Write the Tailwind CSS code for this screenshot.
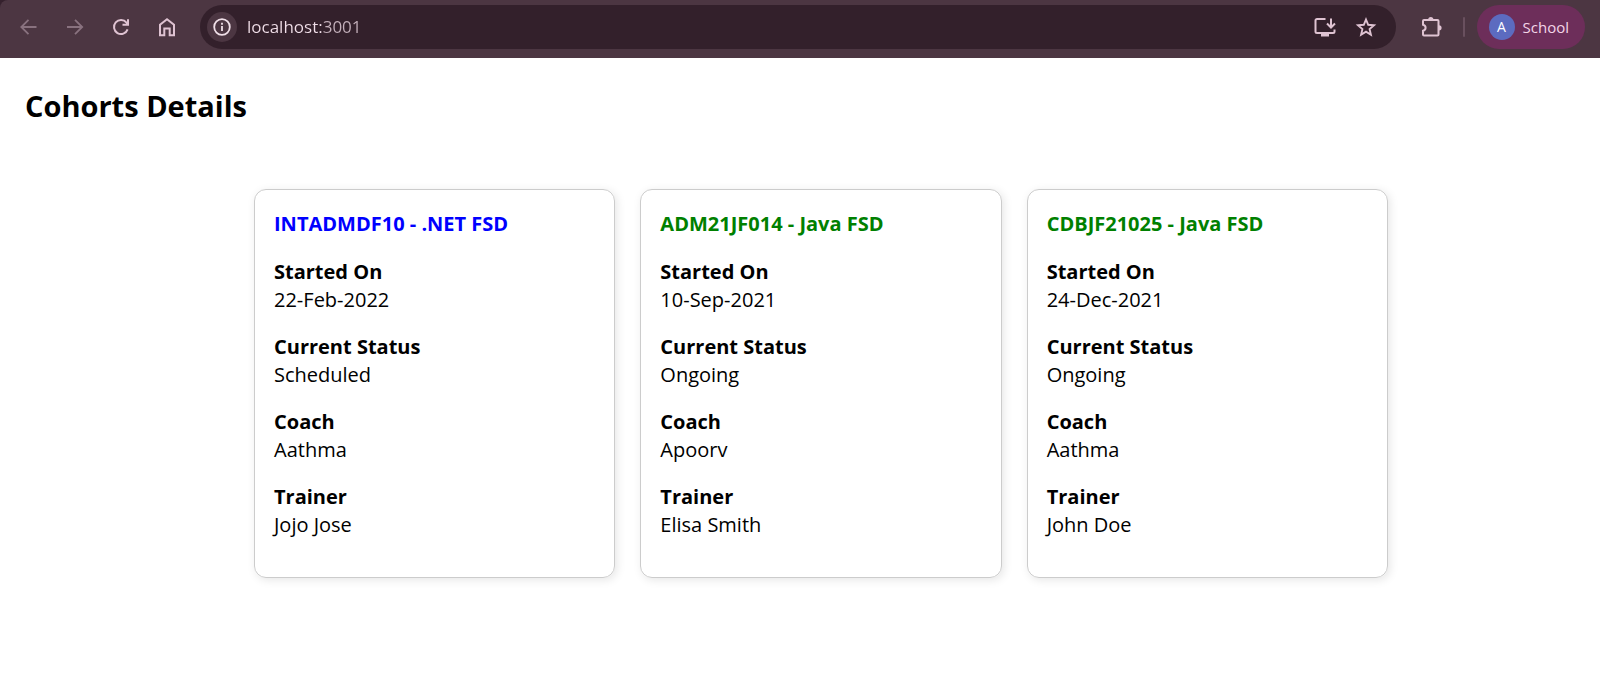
<!DOCTYPE html>
<html lang="en">
<head>
<meta charset="utf-8">
<meta name="viewport" content="width=device-width, initial-scale=1">
<title>Cohorts Details</title>
<script src="https://cdn.jsdelivr.net/npm/@tailwindcss/browser@4"></script>
</head>
<body class="bg-white font-['Open_Sans','Noto_Sans',sans-serif] text-black">
<header class="bg-[#35212d]">
  <div class="flex h-[58px] items-center rounded-tl-lg bg-[#4c3642] pr-[15px] pl-[17px] pb-1 text-[#dfc3d2]">
    <nav class="flex items-center gap-[22px]" aria-label="Browser navigation">
      <button type="button" aria-label="Back" class="grid size-6 place-items-center text-[#89727f]">
        <svg class="size-6" viewBox="0 0 24 24" fill="none" stroke="currentColor" stroke-width="1.8"><path d="M19.500 12H5M11.500 4.800 4.300 12l7.200 7.200"/></svg>
      </button>
      <button type="button" aria-label="Forward" class="grid size-6 place-items-center text-[#89727f]">
        <svg class="size-6" viewBox="0 0 24 24" fill="none" stroke="currentColor" stroke-width="1.8"><path d="M4 12h14.500M12 4.800l7.200 7.200-7.200 7.200"/></svg>
      </button>
      <button type="button" aria-label="Reload" class="grid size-6 place-items-center">
        <svg class="size-6" viewBox="0 0 24 24" fill="none" stroke="currentColor" stroke-width="2"><path d="M18.600 14.400A7 7 0 1 1 17.500 7.700L19 9.500M19 4.300v5.500h-5.500"/></svg>
      </button>
      <button type="button" aria-label="Home" class="grid size-6 place-items-center">
        <svg class="size-6" viewBox="0 0 24 24" fill="none" stroke="currentColor" stroke-width="2"><path d="M5 20.300V9.700l7-5.400 7 5.400v10.600h-4.300v-6.800H9.300v6.800z"/></svg>
      </button>
    </nav>
    <div class="ml-[21px] flex h-11 min-w-0 flex-1 items-center rounded-full bg-[#33202b] pr-[18px] pl-[7px]">
      <button type="button" aria-label="View site information" class="grid size-[30px] shrink-0 place-items-center rounded-full bg-[#4c3642] text-[#f0dfe8]">
        <svg class="size-5" viewBox="0 0 20 20" fill="none" stroke="currentColor" stroke-width="1.800"><circle cx="10" cy="10" r="7.800"/><path d="M10 9v5M10 5.800v2"/></svg>
      </button>
      <input type="text" aria-label="Address" value="localhost:3001" class="ml-[10px] min-w-0 flex-1 bg-[linear-gradient(90deg,#f1dfe9_75px,#c5b1bc_75px)] bg-clip-text text-[17px] leading-7 text-transparent outline-none">
      <button type="button" aria-label="Install app" class="grid size-6 shrink-0 place-items-center">
        <svg class="size-6" viewBox="0 0 24 24" fill="none" stroke="currentColor" stroke-width="2"><path d="M12.500 4H4a1.500 1.500 0 0 0-1.500 1.500v11A1.500 1.500 0 0 0 4 18h16a1.500 1.500 0 0 0 1.500-1.500V14.500M18 3.500v8.500M14 8.500l4 4 4-4"/><path d="M8 18h8v3.500H8z" fill="currentColor" stroke="none"/></svg>
      </button>
      <button type="button" aria-label="Bookmark this page" class="ml-[17px] grid size-6 shrink-0 place-items-center">
        <svg class="size-6" viewBox="0 0 24 24" fill="none" stroke="currentColor" stroke-width="1.900"><path d="m12 4.500 2.200 5.300 5.800.5-4.400 3.800 1.300 5.600-4.900-3-4.900 3 1.300-5.600L4 10.300l5.800-.5z"/></svg>
      </button>
    </div>
    <button type="button" aria-label="Extensions" class="ml-[23px] grid size-6 shrink-0 place-items-center">
      <svg class="size-6" viewBox="0 0 24 24"><path d="M5 5h13.500a1 1 0 0 1 1 1v13.500a1 1 0 0 1-1 1H5a1 1 0 0 1-1-1v-3.700c1.700-.4 2.600-1.500 2.600-3s-.9-2.600-2.600-3V6a1 1 0 0 1 1-1z" fill="none" stroke="currentColor" stroke-width="2"/><path d="M9.200 4.500a2.600 2.600 0 0 1 5.200 0zM20 10.200a2.600 2.600 0 0 1 0 5.200z" fill="currentColor"/></svg>
    </button>
    <span class="ml-5 h-5 w-0.5 shrink-0 rounded-full bg-[#69505e]"></span>
    <button type="button" class="ml-3 flex h-11 shrink-0 items-center gap-2 rounded-full bg-[#6d2e5a] pr-4 pl-3 text-[15px] text-[#f3d5e7]">
      <span class="grid size-[26px] place-items-center rounded-full bg-[#5c6bc0] text-sm text-white">A</span>
      School
    </button>
  </div>
</header>
<main class="pt-6 pb-10">
  <h1 class="px-[25px] text-[29px] leading-12 font-bold">Cohorts Details</h1>
  <div class="mt-[59px] grid grid-cols-3 gap-[25px] pr-[212px] pl-[254px] text-xl leading-7">
    <section class="rounded-xl border border-[#ccc] px-[19px] pt-5 pb-[38px] shadow-[2px_2px_10px_rgba(0,0,0,0.1)]">
      <h2 class="font-bold text-[#0000ff]">INTADMDF10 - .NET FSD</h2>
      <dl class="mt-5 grid">
        <dt class="font-bold">Started On</dt><dd class="mb-[19px]">22-Feb-2022</dd>
        <dt class="font-bold">Current Status</dt><dd class="mb-[19px]">Scheduled</dd>
        <dt class="font-bold">Coach</dt><dd class="mb-[19px]">Aathma</dd>
        <dt class="font-bold">Trainer</dt><dd>Jojo Jose</dd>
      </dl>
    </section>
    <section class="rounded-xl border border-[#ccc] px-[19px] pt-5 pb-[38px] shadow-[2px_2px_10px_rgba(0,0,0,0.1)]">
      <h2 class="font-bold text-[#008000]">ADM21JF014 - Java FSD</h2>
      <dl class="mt-5 grid">
        <dt class="font-bold">Started On</dt><dd class="mb-[19px]">10-Sep-2021</dd>
        <dt class="font-bold">Current Status</dt><dd class="mb-[19px]">Ongoing</dd>
        <dt class="font-bold">Coach</dt><dd class="mb-[19px]">Apoorv</dd>
        <dt class="font-bold">Trainer</dt><dd>Elisa Smith</dd>
      </dl>
    </section>
    <section class="rounded-xl border border-[#ccc] px-[19px] pt-5 pb-[38px] shadow-[2px_2px_10px_rgba(0,0,0,0.1)]">
      <h2 class="font-bold text-[#008000]">CDBJF21025 - Java FSD</h2>
      <dl class="mt-5 grid">
        <dt class="font-bold">Started On</dt><dd class="mb-[19px]">24-Dec-2021</dd>
        <dt class="font-bold">Current Status</dt><dd class="mb-[19px]">Ongoing</dd>
        <dt class="font-bold">Coach</dt><dd class="mb-[19px]">Aathma</dd>
        <dt class="font-bold">Trainer</dt><dd>John Doe</dd>
      </dl>
    </section>
  </div>
</main>
</body>
</html>
